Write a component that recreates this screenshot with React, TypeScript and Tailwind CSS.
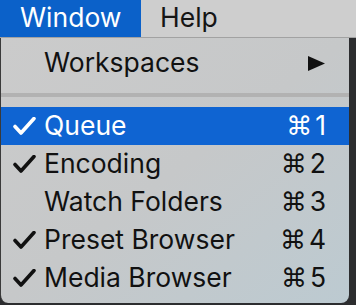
import React from 'react';

type Item = { label: string; checked: boolean; key: string; active?: boolean };

const items: Item[] = [
  { label: 'Queue', checked: true, key: '1', active: true },
  { label: 'Encoding', checked: true, key: '2' },
  { label: 'Watch Folders', checked: false, key: '3' },
  { label: 'Preset Browser', checked: true, key: '4' },
  { label: 'Media Browser', checked: true, key: '5' },
];

function Check({ white }: { white?: boolean }) {
  return (
    <svg width="24" height="18" viewBox="0 0 24 18" fill="none">
      <path
        d="M2 9.5 L8 16 L21 1.5"
        stroke={white ? '#ffffff' : '#111111'}
        strokeWidth={3.6}
        strokeLinecap="round"
        strokeLinejoin="round"
      />
    </svg>
  );
}

export default function App() {
  return (
    <div
      className="w-[356px] h-[305px] overflow-hidden bg-[#2c2d2f] text-[26.5px] leading-none"
      style={{ fontFamily: 'Inter, "DejaVu Sans", sans-serif' }}
    >
      <div className="flex h-[38px] bg-[#cecece] border-b border-[#a2a2a2]">
        <div className="w-[141px] h-[37px] bg-[#0b61c9] text-white flex items-center pl-[20px] pb-[2px]">Window</div>
        <div className="flex items-center pl-[19px] pb-[2px] text-[#151515]">Help</div>
      </div>
      <div className="w-[349px] h-[265px] border-l border-[#3a3a3a] rounded-b-[8px] bg-gradient-to-br from-[#cbcbcb] via-[#c6c8c9] to-[#bccad1] pt-[6px] text-[#111]">
        <div className="h-[38px] flex items-center pl-[43px] pr-[24px]">
          <span className="flex-1 pb-[1px]">Workspaces</span>
          <svg width="17" height="15" viewBox="0 0 17 15">
            <path d="M0 0 L17 7.5 L0 15 Z" fill="#111" />
          </svg>
        </div>
        <div className="h-[25px] flex items-center">
          <div className="w-full h-[4px] bg-[#b2b2b2]" />
        </div>
        {items.map(it => (
          <div
            key={it.label}
            className={`h-[38px] flex items-center pr-[23px] ${it.active ? 'bg-[#0f64d2] text-white' : ''}`}
          >
            <div className="w-[43px] pl-[12px] flex items-center">
              {it.checked && <Check white={it.active} />}
            </div>
            <span className="flex-1 pb-[1px]">{it.label}</span>
            <span className="flex items-center gap-[3px] pb-[1px]">
              <span className="text-[26px]" style={{ fontFamily: '"DejaVu Sans", sans-serif' }}>⌘</span>
              <span>{it.key}</span>
            </span>
          </div>
        ))}
      </div>
    </div>
  );
}
